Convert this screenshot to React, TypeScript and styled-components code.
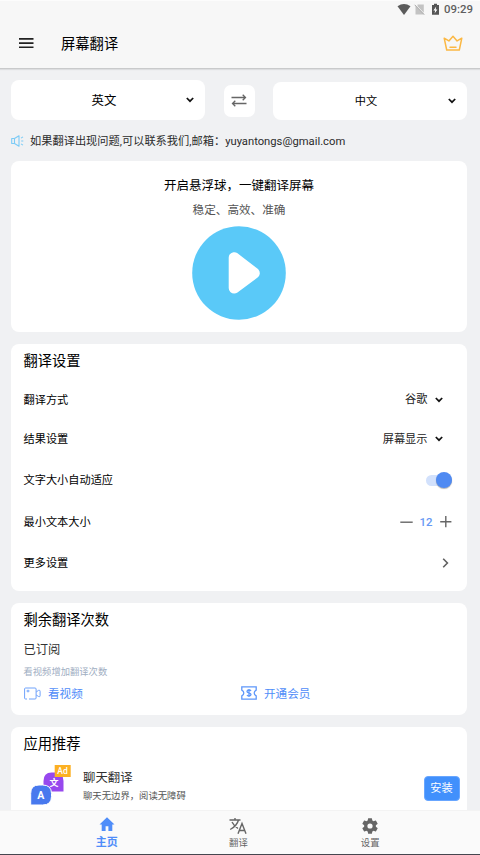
import React from 'react';
import styled, { createGlobalStyle, css } from 'styled-components';

const GlobalStyle = createGlobalStyle`
  * { box-sizing: border-box; }
  html, body { margin: 0; padding: 0; }
  body {
    font-family: Roboto, "Noto Sans CJK SC", sans-serif;
    background: #f0f1f3;
    color: #111;
    overflow: hidden;
  }
  svg { display: block; flex: none; }
`;

const Screen = styled.div`
  width: 480px;
  height: 855px;
  display: flex;
  flex-direction: column;
  overflow: hidden;
  background: #f0f1f3;
  border-bottom: 1px solid #45464f;
`;

const Header = styled.header`
  flex: none;
  height: 69px;
  background: #f7f7f7;
  border-top: 1px solid #fcfcfc;
  border-bottom: 1px solid #c9cacb;
  box-shadow: 0 1px 1px rgba(0, 0, 0, 0.08);
`;

const StatusBar = styled.div`
  height: 17px;
  padding: 0 7px 0 0;
  display: flex;
  justify-content: flex-end;
  align-items: center;
  color: #5f5f5f;
  font-size: 11.4px;
  line-height: 17px;
`;

const Clock = styled.span`
  width: 29px;
  margin-left: 4px;
  font-weight: 500;
  white-space: nowrap;
`;

const Toolbar = styled.div`
  height: 50px;
  padding: 0 17px 0 19px;
  display: flex;
  align-items: center;
`;

const AppTitle = styled.h1`
  flex: 1;
  margin: 1px 0 0 27px;
  font-size: 14.3px;
  line-height: 20px;
  font-weight: 400;
  color: #000;
`;

const Content = styled.main`
  flex: 1;
  min-height: 0;
  overflow: hidden;
  padding: 11px 13px 0 11px;
  display: flex;
  flex-direction: column;
`;

const LanguageRow = styled.div`
  flex: none;
  height: 40px;
  display: flex;
  align-items: center;
  justify-content: space-between;
`;

const LanguageSelect = styled.button<{ $compact?: boolean }>`
  width: 194px;
  height: ${(p) => (p.$compact ? '38px' : '40px')};
  margin: ${(p) => (p.$compact ? '2px 0 0' : '0')};
  padding: 0 10px 0 12px;
  border: 0;
  border-radius: 8px;
  background: #fff;
  display: flex;
  align-items: center;
  font: 400 ${(p) => (p.$compact ? '11.2px' : '12.4px')}/18px Roboto, "Noto Sans CJK SC", sans-serif;
  color: #000;
  span { flex: 1; text-align: center; padding-top: 1px; }
`;

const SwapButton = styled.button`
  width: 31px;
  height: 32px;
  margin-top: 1px;
  padding: 0;
  border: 0;
  border-radius: 7px;
  background: #fff;
  display: grid;
  place-items: center;
`;

const Notice = styled.div`
  flex: none;
  height: 41px;
  display: flex;
  align-items: center;
  gap: 5px;
  padding-top: 1px;
  font-size: 11.23px;
  line-height: 16px;
  color: #2b2b2b;
  white-space: nowrap;
  span { padding-top: 2px; }
`;

const Card = styled.section<{ $height: number }>`
  flex: none;
  height: ${(p) => p.$height}px;
  margin-bottom: 12px;
  padding: 0 12.5px;
  border-radius: 8px;
  background: #fff;
`;

const Hero = styled(Card)`
  display: flex;
  flex-direction: column;
  align-items: center;
  padding-top: 15px;
`;

const HeroTitle = styled.h2`
  margin: 0;
  font-size: 12.5px;
  line-height: 20px;
  font-weight: 400;
  color: #000;
`;

const HeroText = styled.p`
  margin: 5px 0 5.500px;
  font-size: 11.6px;
  line-height: 19px;
  color: #555;
`;

const CardTitle = styled.h2`
  margin: 0;
  padding-top: 7px;
  height: 37px;
  font-size: 14.25px;
  line-height: 21px;
  font-weight: 400;
  color: #000;
`;

const SettingList = styled.div`
  margin-top: -1px;
`;

const SettingRow = styled.div<{ $height: number; $end: number }>`
  height: ${(p) => p.$height}px;
  padding-right: ${(p) => p.$end}px;
  display: flex;
  align-items: center;
  justify-content: space-between;
  font-size: 11.2px;
  line-height: 16px;
`;

const Label = styled.span`
  padding-top: 2px;
  color: #000;
`;

const Value = styled.span`
  display: flex;
  align-items: center;
  gap: 6px;
  color: #222;
  span { padding-top: 1px; }
`;

const Stepper = styled.span`
  display: flex;
  align-items: center;
  gap: 7px;
  font-size: 11.4px;
  color: #6699f4;
  font-weight: 500;
`;

const Switch = styled.span`
  width: 26px;
  height: 11px;
  margin-right: 1px;
  border-radius: 6px;
  background: #d2e1fc;
  display: flex;
  align-items: center;
  justify-content: flex-end;
  &::after {
    content: '';
    width: 16px;
    height: 16px;
    border-radius: 50%;
    background: #4f8af2;
    box-shadow: 0 1px 1px rgba(0, 0, 0, 0.3);
  }
`;

const Subscribed = styled.div`
  font-size: 12.3px;
  line-height: 20px;
  color: #333;
`;

const Hint = styled.div`
  margin-top: 4px;
  font-size: 9.3px;
  line-height: 16px;
  color: #a0aec2;
`;

const Actions = styled.div`
  display: grid;
  grid-template-columns: 217px 1fr;
  margin-top: 3px;
`;

const Action = styled.a`
  display: flex;
  align-items: center;
  gap: 7.5px;
  height: 20px;
  font-size: 11.6px;
  color: #4f8df9;
`;

const AppRow = styled.div`
  display: flex;
  height: 44px;
  padding-left: 6.5px;
`;

const AppText = styled.div`
  flex: 1;
  padding: 4px 0 0 11px;
`;

const AppName = styled.div`
  font-size: 12.4px;
  line-height: 20px;
  color: #303030;
`;

const AppDescription = styled.div`
  font-size: 9.35px;
  line-height: 16px;
  color: #555;
`;

const InstallButton = styled.button`
  width: 36px;
  height: 25px;
  margin: 12px -5px 0 0;
  padding: 1px 0 0;
  border: 1px solid #68a6ff;
  border-radius: 4px;
  background: #4190fc;
  color: #fff;
  font: 400 11.2px/20px Roboto, "Noto Sans CJK SC", sans-serif;
`;

const BottomNav = styled.nav`
  flex: none;
  height: 44px;
  border-top: 1px solid #f3f3f3;
  padding: 0 44px 0 41px;
  display: grid;
  grid-template-columns: repeat(3, 1fr);
  background: #fafafa;
`;

const Tab = styled.a<{ $active?: boolean }>`
  display: flex;
  flex-direction: column;
  align-items: center;
  padding-top: 6px;
  font-size: 9.4px;
  line-height: 14px;
  color: #666;
  svg { margin-bottom: 1px; }
  ${(p) =>
    p.$active &&
    css`
      padding-top: 5px;
      color: #4f8df9;
      font-size: 11px;
      font-weight: 700;
      svg { margin-bottom: 3px; }
    `}
`;

const Chevron = () => (
  <svg width="10" height="8" viewBox="0 0 10 8" fill="none" stroke="#111" strokeWidth="1.7">
    <path d="M1.8 2 5 5.2 8.2 2" />
  </svg>
);

const MenuIcon = () => (
  <svg width="15" height="12" viewBox="0 0 15 12" fill="#222">
    <path d="M0 1h14.5v1.7H0zM0 5.2h14.5v1.7H0zM0 9.4h14.5v1.7H0z" />
  </svg>
);

const StatusIcons = () => (
  <svg width="45" height="14" viewBox="0 0 45 14">
    <path d="M2.500 3.200Q9 -1 15.500 3.200L9 12z" fill="#5b5b5b" />
    <path d="M20.500 2.800 28.800 11v.5h-8.300zM22.500 1.500h6.300v8.300L22.500 3.300z" fill="#c3c3c3" />
    <path d="m19.700 1.800 9.500 9.800" stroke="#a9a9a9" strokeWidth="1" />
    <path d="M37 2h2V.7h3V2h2v9.700h-7z" fill="#555" />
    <path d="m41.200 3.500-2.800 4h1.700l-.5 3 2.800-4.100h-1.700z" fill="#fff" />
  </svg>
);

const Crown = () => (
  <svg width="20" height="17" viewBox="0 0 20 17" fill="none" stroke="#fbb844" strokeWidth="1.5" strokeLinejoin="round" strokeLinecap="round">
    <path d="m1.200 3.200 2.500 11.800h12.600l2.500-11.800-4.700 2.700-4.100-4.700-4.100 4.700z" />
    <path d="M7 12.200h6" />
  </svg>
);

const SwapIcon = () => (
  <svg width="16" height="14" viewBox="0 0 16 14" fill="none" stroke="#666" strokeWidth="1.3">
    <path d="M.5 3.500h14M11.700.7l2.800 2.800-2.800 2.800M15.500 9.500h-14M4.300 6.700 1.500 9.500l2.800 2.800" />
  </svg>
);

const Speaker = () => (
  <svg width="14" height="12" viewBox="0 0 14 12" fill="none" stroke="#7ccbf6" strokeWidth="1.1" strokeLinejoin="round">
    <path d="M.7 3.500h2.800L8 .8v10.400L3.500 8.500H.700zM3.500 3.500v5M10 3.100l2-1.200M10.200 6h2.100M10 8.900l2 1.200" />
  </svg>
);

const PlayIcon = () => (
  <svg width="94" height="94" viewBox="0 0 94 94">
    <circle cx="47" cy="47" r="46.800" fill="#5ac9f8" />
    <path d="M42.200 31.700v30.400L62.300 47.200z" fill="#fff" stroke="#fff" strokeWidth="11" strokeLinejoin="round" />
  </svg>
);

const Minus = () => (
  <svg width="13" height="13" viewBox="0 0 13 13" stroke="#666" strokeWidth="1.4">
    <path d="M.3 6.200h12.400" />
  </svg>
);

const Plus = () => (
  <svg width="12" height="12" viewBox="0 0 12 12" stroke="#666" strokeWidth="1.400">
    <path d="M.2 5.700h11.200M5.800.1v11.200" />
  </svg>
);

const RightArrow = () => (
  <svg width="7" height="10" viewBox="0 0 7 10" fill="none" stroke="#606060" strokeWidth="1.600">
    <path d="m1.200.8 4.200 4.200-4.200 4.200" />
  </svg>
);

const VideoIcon = () => (
  <svg width="17" height="13" viewBox="0 0 17 13" fill="none" stroke="#6fa2fb" strokeWidth="1">
    <path d="M3 12H1.500Q.6 12 .6 11V2Q.6 1 1.500 1H11q1.100 0 1.100 1v9q0 1-1.100 1H5M12.200 5l2.400-1.700q1.500-.5 1.500 1v4.500q0 1.400-1.500.7L12.200 8M2.500 4h3M4 2.700v2.700" />
  </svg>
);

const Ticket = () => (
  <svg width="16" height="14" viewBox="0 0 16 14" fill="none" stroke="#5e97fa" strokeWidth="1.300">
    <path d="M.8.8h14.400v3.300Q13.200 5 13.200 7t2 2.900v3.300H.8V9.900q2-.9 2-2.900t-2-2.900z" />
    <path d="M10 5Q9.500 4 8 4 6 4 6 5.400C6 7.200 10 6.600 10 8.600 10 10 8 10 8 10Q6.500 10 6 9M8 2.900v8.200" />
  </svg>
);

const AppLogo = () => (
  <svg width="42" height="42" viewBox="0 0 42 42">
    <path d="M21.500 8.500H25q8.500 0 8.500 8.500v10.500h-20V17q0-8.500 8-8.500" fill="#9748ee" />
    <text x="24" y="21.500" textAnchor="middle" fontSize="9" fontWeight="700" fill="#fff">文</text>
    <path d="M9 21h3.500q9 0 9 8.500v3q0 8.500-9 8.500H.7V29.500Q.7 21 9 21" fill="#4879ee" stroke="#fff" strokeWidth="1" />
    <text x="10.800" y="34.800" textAnchor="middle" fontSize="10.500" fontWeight="700" fill="#fff">A</text>
    <rect x="24.700" y="1" width="16" height="12" fill="#fcb022" />
    <text x="32.500" y="10" textAnchor="middle" fontSize="8.500" fontWeight="500" fill="#fff">Ad</text>
  </svg>
);

const HomeIcon = () => (
  <svg width="18" height="17" viewBox="0 0 18 17" fill="#4f8df9">
    <path d="M9 1.300 1.500 8.500h2.200V15h3.900v-4.700h2.800V15h3.900V8.500h2.200z" />
  </svg>
);

const TranslateIcon = () => (
  <svg width="18" height="18" viewBox="0 0 18 18" fill="none" stroke="#666" strokeWidth="1.400">
    <path d="M.5 3h11M6 1v2M9.500 3Q8 8.800 1.200 12.500M3 5q2 4 6 6.500M9 16.700l4-10.200 4 10.200M10.300 13.500h5.400" />
  </svg>
);

const GearIcon = () => (
  <svg width="18" height="18" viewBox="1 1 22 22" fill="#666">
    <path d="M19.140 12.940c.04-.3.060-.61.060-.94s-.02-.64-.07-.94l2.030-1.580a.49.49 0 0 0 .12-.61l-1.920-3.320a.49.49 0 0 0-.59-.22l-2.390.96a7 7 0 0 0-1.620-.94l-.36-2.540A.48.48 0 0 0 13.920 2.400h-3.840a.48.48 0 0 0-.47.410l-.36 2.540a7 7 0 0 0-1.620.94l-2.390-.96a.48.48 0 0 0-.59.220L2.740 8.870a.48.48 0 0 0 .12.610l2.030 1.580a6 6 0 0 0 0 1.880l-2.030 1.580a.49.49 0 0 0-.12.610l1.920 3.320c.12.220.37.290.59.220l2.390-.96c.5.380 1.030.7 1.620.94l.36 2.540c.05.240.24.410.48.410h3.840c.24 0 .44-.17.470-.41l.36-2.540a7 7 0 0 0 1.620-.94l2.390.96c.22.080.47 0 .59-.22l1.920-3.320a.48.48 0 0 0-.12-.61zM12 15.200a3.200 3.200 0 1 1 0-6.400 3.200 3.200 0 0 1 0 6.400" />
  </svg>
);

export default function App() {
  return (
    <>
      <GlobalStyle />
      <Screen>
        <Header>
          <StatusBar>
            <StatusIcons />
            <Clock>09:29</Clock>
          </StatusBar>
          <Toolbar>
            <MenuIcon />
            <AppTitle>屏幕翻译</AppTitle>
            <Crown />
          </Toolbar>
        </Header>
        <Content>
          <LanguageRow>
            <LanguageSelect><span>英文</span><Chevron /></LanguageSelect>
            <SwapButton><SwapIcon /></SwapButton>
            <LanguageSelect $compact><span>中文</span><Chevron /></LanguageSelect>
          </LanguageRow>
          <Notice>
            <Speaker />
            <span>如果翻译出现问题,可以联系我们,邮箱：yuyantongs@gmail.com</span>
          </Notice>
          <Hero $height={171}>
            <HeroTitle>开启悬浮球，一键翻译屏幕</HeroTitle>
            <HeroText>稳定、高效、准确</HeroText>
            <PlayIcon />
          </Hero>
          <Card $height={247}>
            <CardTitle>翻译设置</CardTitle>
            <SettingList>
              <SettingRow $height={39} $end={11}>
                <Label>翻译方式</Label><Value><span>谷歌</span><Chevron /></Value>
              </SettingRow>
              <SettingRow $height={40} $end={11}>
                <Label>结果设置</Label><Value><span>屏幕显示</span><Chevron /></Value>
              </SettingRow>
              <SettingRow $height={42} $end={2}>
                <Label>文字大小自动适应</Label><Switch />
              </SettingRow>
              <SettingRow $height={42} $end={3}>
                <Label>最小文本大小</Label><Stepper><Minus />12<Plus /></Stepper>
              </SettingRow>
              <SettingRow $height={40} $end={6}>
                <Label>更多设置</Label><RightArrow />
              </SettingRow>
            </SettingList>
          </Card>
          <Card $height={112}>
            <CardTitle>剩余翻译次数</CardTitle>
            <Subscribed>已订阅</Subscribed>
            <Hint>看视频增加翻译次数</Hint>
            <Actions>
              <Action><VideoIcon />看视频</Action>
              <Action><Ticket />开通会员</Action>
            </Actions>
          </Card>
          <Card $height={112}>
            <CardTitle>应用推荐</CardTitle>
            <AppRow>
              <AppLogo />
              <AppText>
                <AppName>聊天翻译</AppName>
                <AppDescription>聊天无边界，阅读无障碍</AppDescription>
              </AppText>
              <InstallButton>安装</InstallButton>
            </AppRow>
          </Card>
        </Content>
        <BottomNav>
          <Tab $active><HomeIcon />主页</Tab>
          <Tab><TranslateIcon />翻译</Tab>
          <Tab><GearIcon />设置</Tab>
        </BottomNav>
      </Screen>
    </>
  );
}
